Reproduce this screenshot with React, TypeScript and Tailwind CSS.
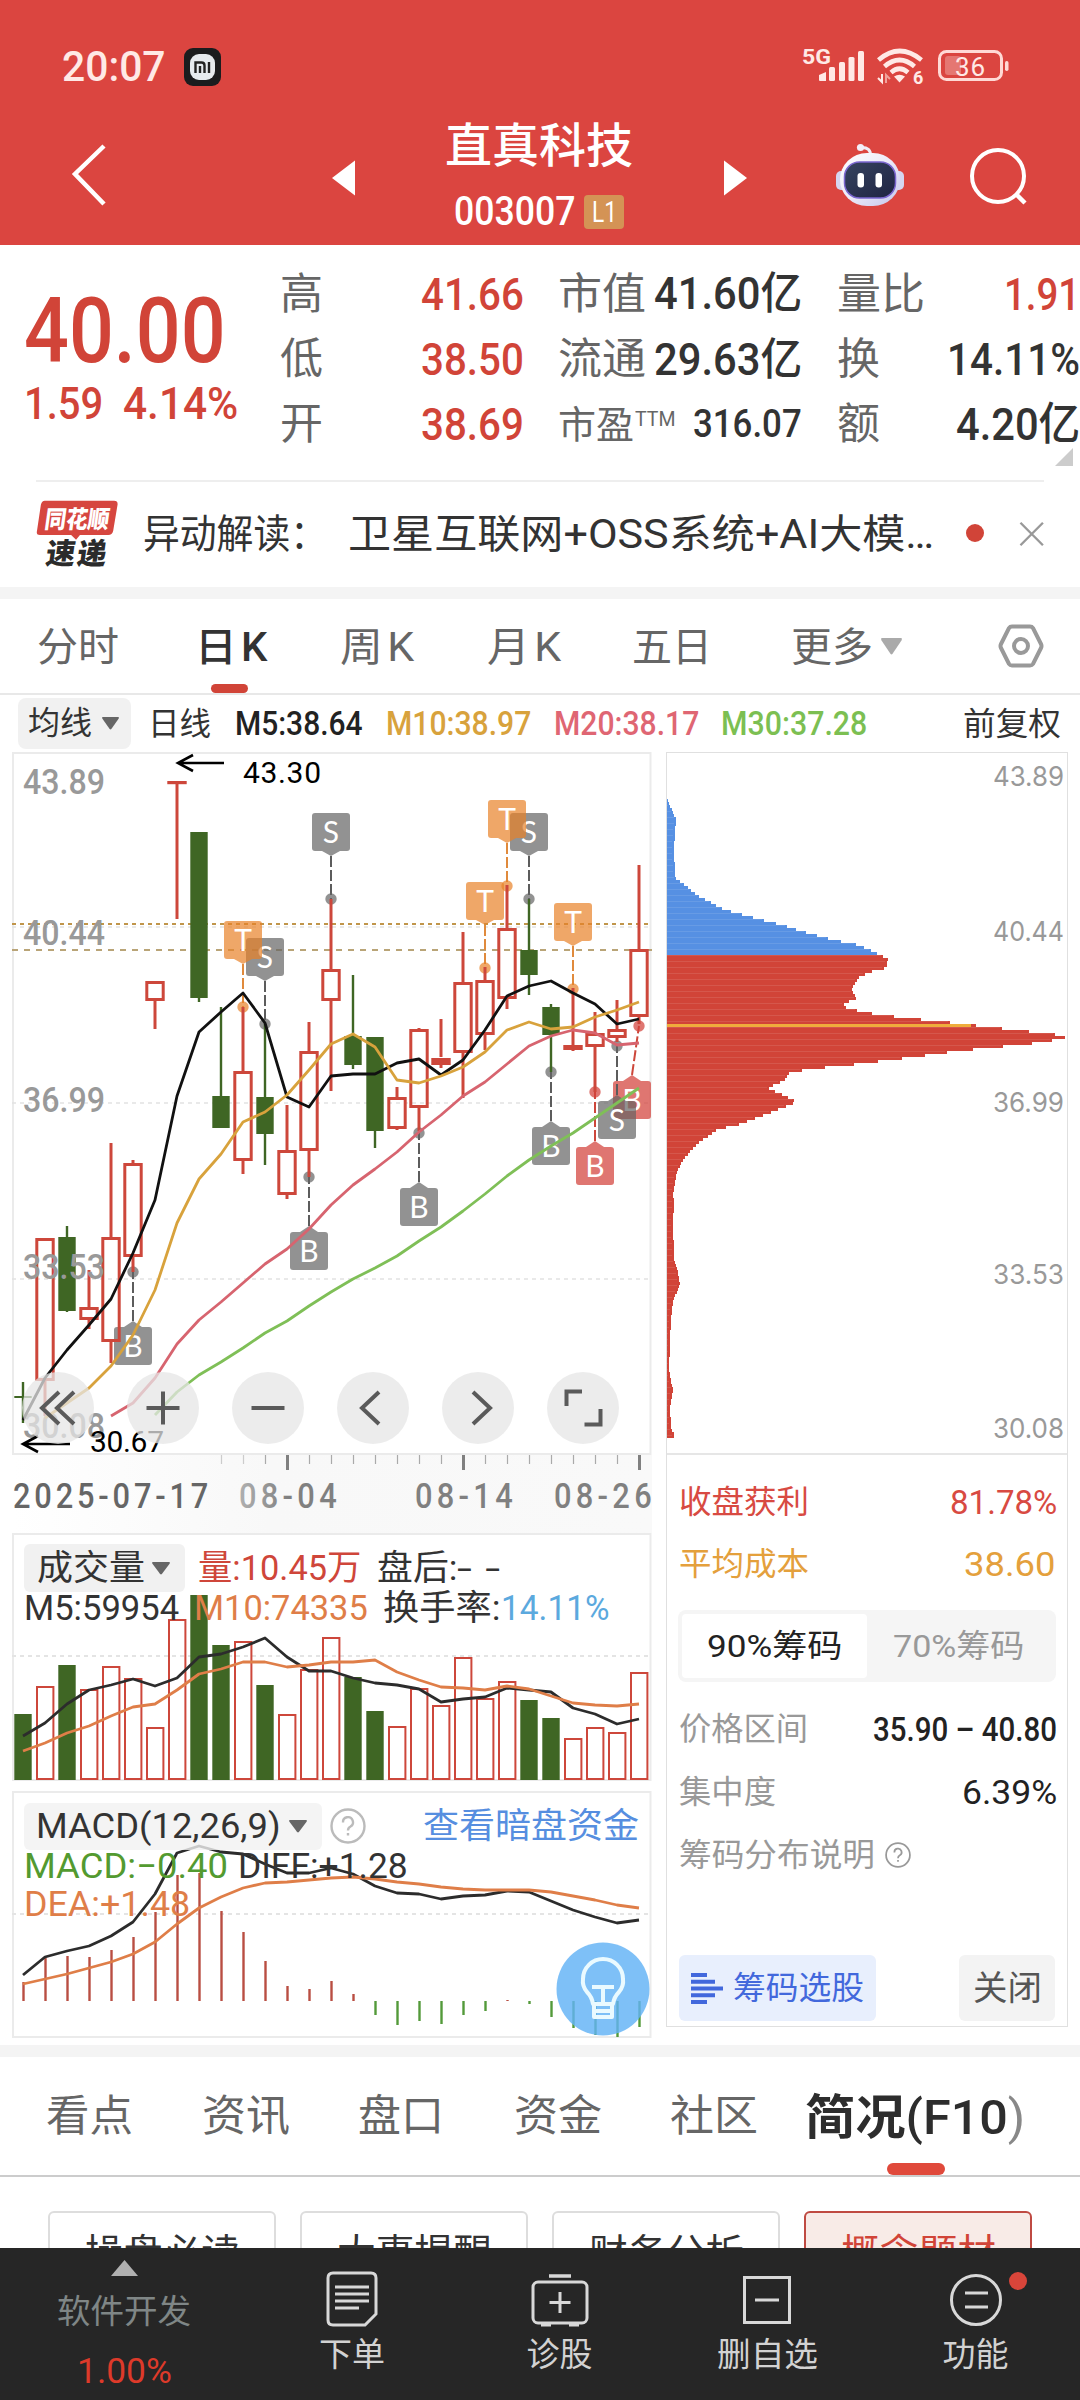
import React, { useLayoutEffect, useRef } from 'react';

interface FitProps {
  className?: string;
  children: React.ReactNode;
}

// Single line of text squeezed or stretched to the width of its box
const Fit: React.FC<FitProps> = ({ className = '', children }) => {
  const box = useRef<HTMLDivElement>(null);
  const text = useRef<HTMLSpanElement>(null);

  useLayoutEffect(() => {
    if (!box.current || !text.current) return;
    const ratio = box.current.clientWidth / text.current.offsetWidth;
    text.current.style.transform = `scaleX(${ratio})`;
  }, [children]);

  return (
    <div ref={box} className={`shrink-0 leading-none whitespace-nowrap ${className}`}>
      <span ref={text} className="inline-block origin-left">{children}</span>
    </div>
  );
};

const RED = '#cd473b';
const GREEN = '#3f6624';
const cx = (i: number) => 23 + 22 * i;

// [up, high, bodyTop, bodyBottom, low]
const candles: [boolean, number, number, number, number][] = [
  [false, 1382, 1396, 1398, 1423],
  [true, 1238, 1238, 1381, 1416],
  [false, 1226, 1237, 1311, 1312],
  [true, 1270, 1307, 1320, 1329],
  [true, 1143, 1237, 1342, 1363],
  [true, 1160, 1163, 1257, 1272],
  [true, 981, 981, 1001, 1029],
  [true, 783, 782, 784, 919],
  [false, 832, 832, 998, 1002],
  [false, 1007, 1096, 1128, 1128],
  [true, 1007, 1071, 1161, 1174],
  [false, 1024, 1097, 1134, 1165],
  [true, 1105, 1150, 1195, 1199],
  [true, 1022, 1051, 1151, 1177],
  [true, 899, 969, 1001, 1091],
  [false, 975, 1036, 1065, 1069],
  [false, 1037, 1037, 1131, 1148],
  [true, 1087, 1097, 1129, 1130],
  [true, 1028, 1029, 1108, 1131],
  [true, 1019, 1057, 1063, 1068],
  [true, 932, 982, 1053, 1098],
  [true, 967, 980, 1035, 1050],
  [true, 885, 928, 999, 1009],
  [false, 899, 950, 975, 995],
  [false, 1004, 1007, 1035, 1072],
  [true, 988, 1045, 1049, 1051],
  [true, 1012, 1033, 1047, 1092],
  [true, 1000, 1029, 1038, 1042],
  [true, 865, 949, 1017, 1024],
];

const ma5 = [1420, 1378, 1350, 1325, 1299, 1253, 1200, 1096, 1032, 1012, 993, 1023, 1097, 1107, 1076, 1074, 1074, 1063, 1059, 1075, 1060, 1030, 996, 986, 981, 993, 1004, 1024, 1019];
const ma10 = [1418, 1403, 1388, 1366, 1335, 1290, 1223, 1179, 1154, 1122, 1112, 1095, 1070, 1044, 1034, 1047, 1080, 1083, 1076, 1067, 1052, 1030, 1022, 1029, 1027, 1017, 1010, 1002];
const ma20 = [1416, 1403, 1378, 1344, 1320, 1302, 1283, 1264, 1249, 1229, 1205, 1185, 1169, 1152, 1132, 1115, 1096, 1082, 1064, 1046, 1036, 1030, 1033, 1045, 1043];
const ma30 = [1415, 1392, 1375, 1362, 1348, 1333, 1321, 1306, 1292, 1279, 1268, 1256, 1241, 1227, 1211, 1194, 1176, 1160, 1146, 1133, 1118, 1103, 1088];

const volumeTop = [1714, 1688, 1665, 1691, 1668, 1680, 1729, 1621, 1595, 1645, 1643, 1685, 1716, 1671, 1639, 1677, 1711, 1728, 1690, 1707, 1659, 1700, 1683, 1700, 1718, 1740, 1729, 1734, 1674];
const vol5 = [1736, 1723, 1704, 1690, 1685, 1679, 1686, 1678, 1657, 1654, 1647, 1638, 1657, 1671, 1671, 1678, 1683, 1685, 1689, 1702, 1699, 1697, 1688, 1690, 1692, 1708, 1714, 1724, 1719];
const vol10 = [1751, 1743, 1733, 1726, 1716, 1707, 1704, 1690, 1674, 1669, 1662, 1662, 1667, 1665, 1662, 1662, 1660, 1672, 1680, 1687, 1688, 1690, 1686, 1689, 1696, 1703, 1705, 1706, 1704];

const macdEnd = [1982, 1958, 1956, 1957, 1950, 1937, 1912, 1875, 1873, 1911, 1932, 1961, 1986, 1989, 1981, 1994, 2015, 2025, 2021, 2024, 2015, 2011, 2000, 2004, 2017, 2028, 2035, 2037, 2027];
const diff = [1975, 1957, 1951, 1946, 1936, 1922, 1894, 1853, 1846, 1852, 1854, 1864, 1873, 1873, 1868, 1874, 1886, 1893, 1894, 1899, 1896, 1895, 1891, 1892, 1901, 1910, 1917, 1923, 1920];
const dea = [1984, 1979, 1974, 1968, 1962, 1954, 1942, 1924, 1908, 1897, 1888, 1883, 1882, 1880, 1878, 1877, 1879, 1882, 1884, 1887, 1889, 1890, 1890, 1890, 1892, 1896, 1900, 1905, 1908];

// [y, x] outline of the chip distribution
const chips: [number, number][] = [
  [799, 667], [819, 676], [848, 674], [878, 675], [897, 700], [910, 725], [917, 751], [926, 785], [934, 811],
  [941, 838], [945, 858], [949, 868], [956, 882], [959, 888], [968, 886], [972, 870], [978, 858], [989, 852],
  [999, 856], [1002, 848], [1006, 842], [1009, 850], [1014, 874], [1018, 906], [1022, 946], [1025, 971],
  [1028, 998], [1031, 1024], [1034, 1053], [1037, 1067], [1042, 1045], [1045, 1018], [1048, 988], [1051, 957],
  [1055, 929], [1060, 890], [1065, 850], [1069, 810], [1073, 789], [1080, 785], [1088, 768], [1096, 785],
  [1102, 797], [1114, 767], [1125, 738], [1129, 718], [1144, 697], [1160, 683], [1172, 677], [1194, 673],
  [1204, 674], [1222, 673], [1261, 674], [1273, 678], [1284, 680], [1301, 673], [1318, 671], [1369, 669],
  [1391, 673], [1408, 670], [1429, 671], [1434, 674], [1437, 674],
];

const chipX = (y: number) => {
  for (let i = 1; i < chips.length; i++) {
    const [y0, x0] = chips[i - 1];
    const [y1, x1] = chips[i];
    if (y <= y1) return x0 + ((x1 - x0) * (y - y0)) / (y1 - y0);
  }
  return 674;
};

const Line: React.FC<{ data: number[]; color: string }> = ({ data, color }) => (
  <polyline
    points={data.map((y, i) => `${cx(i + 29 - data.length)},${y}`).join(' ')}
    fill="none"
    stroke={color}
    strokeWidth={2.8}
    strokeLinejoin="round"
  />
);

interface MarkProps {
  x: number;
  top: number;
  dot: number;
  letter: string;
  tone: 'gray' | 'orange' | 'red';
  dotX?: number;
}

const tones = {
  gray: ['rgba(100,100,100,.7)', '#5c5c5c'],
  orange: ['rgba(232,130,40,.7)', '#e08a3c'],
  red: ['rgba(210,65,58,.72)', '#cd473b'],
};

const Mark: React.FC<MarkProps> = ({ x, top, dot, letter, tone, dotX = x }) => {
  const [fill, line] = tones[tone];
  const above = dot > top;
  const tip = above ? top + 43 : top - 6;
  const base = above ? top + 38 : top;
  return (
    <g>
      <line x1={x} y1={tip} x2={dotX} y2={dot} stroke={line} strokeWidth={2} strokeDasharray="11 3" />
      <circle cx={dotX} cy={dot} r={5.7} fill={fill} />
      <rect x={x - 19} y={top} width={38} height={38} rx={3} fill={fill} />
      <path d={`M${x - 9} ${base}L${x} ${tip}L${x + 9} ${base}Z`} fill={fill} />
      <text x={x} y={top + 30} fill="#fff" fontSize={30} textAnchor="middle" fontFamily="Lato">{letter}</text>
    </g>
  );
};

const axis: [string, number][] = [['43.89', 794], ['40.44', 945], ['36.99', 1112], ['33.53', 1279], ['30.08', 1438]];
const chipAxis: [string, number][] = [['43.89', 786], ['40.44', 941], ['36.99', 1112], ['33.53', 1284], ['30.08', 1438]];

const CandleChart = () => (
  <svg className="block h-[703px] w-[640px]" viewBox="12 752 640 703" fontFamily="Roboto">
    <rect x="13" y="753" width="637.5" height="701" fill="#fff" stroke="#ebebeb" strokeWidth="2" />
    {[927, 1103, 1279].map(y => (
      <line key={y} x1="12" x2="650" y1={y} y2={y} stroke="#e2e2e2" strokeWidth="1.4" strokeDasharray="4 4" />
    ))}
    <line x1="12" x2="650" y1="924" y2="924" stroke="#c0954a" strokeWidth="2" strokeDasharray="4 4" />
    <line x1="12" x2="652" y1="950" y2="950" stroke="#b9a477" strokeWidth="2" strokeDasharray="6 6" />

    <Mark x={331} top={813} dot={899} letter="S" tone="gray" />
    <Mark x={265} top={938} dot={1024} letter="S" tone="gray" />
    <Mark x={243} top={921} dot={1007} letter="T" tone="orange" />
    <Mark x={529} top={813} dot={899} letter="S" tone="gray" />
    <Mark x={507} top={800} dot={886} letter="T" tone="orange" />
    <Mark x={485} top={882} dot={968} letter="T" tone="orange" />
    <Mark x={573} top={903} dot={989} letter="T" tone="orange" />
    <Mark x={133} top={1327} dot={1272} letter="B" tone="gray" />
    <Mark x={309} top={1232} dot={1177} letter="B" tone="gray" />
    <Mark x={419} top={1188} dot={1133} letter="B" tone="gray" />
    <Mark x={551} top={1127} dot={1072} letter="B" tone="gray" />
    <Mark x={595} top={1147} dot={1092} letter="B" tone="red" />
    <Mark x={632} dotX={639} top={1081} dot={1026} letter="B" tone="red" />
    <Mark x={617} top={1101} dot={1046} letter="S" tone="gray" />

    {candles.map(([up, high, top, bottom, low], i) => {
      const x = cx(i);
      if (!up) {
        return (
          <g key={i} fill={GREEN}>
            <rect x={x - 1.2} y={high} width={2.4} height={low - high} />
            <rect x={x - 8.7} y={top} width={17.4} height={bottom - top} />
          </g>
        );
      }
      return (
        <g key={i} stroke={RED} strokeWidth={3}>
          <line x1={x} x2={x} y1={high} y2={top} />
          <line x1={x} x2={x} y1={bottom} y2={low} />
          {bottom - top < 8 ? (
            <rect x={x - 8.2} y={(top + bottom) / 2 - 0.5} width={16.4} height={Math.max(bottom - top - 2, 0.2)} fill={RED} />
          ) : (
            <rect x={x - 8.2} y={top + 1.5} width={16.4} height={bottom - top - 3} fill="none" />
          )}
        </g>
      );
    })}
    {axis.map(([label, y]) => (
      <text key={label} x="23" y={y} fontSize="35" fontWeight="500" fill="#999" textLength="82" lengthAdjust="spacingAndGlyphs">{label}</text>
    ))}
    <g stroke="#000" strokeWidth="2.6" fill="none">
      <path d="M224 763H179M193 755L178 763L193 771" />
      <path d="M70 1444H24M38 1436L23 1444L38 1452" />
    </g>
    <text x="243" y="783" fontSize="30" textLength="78">43.30</text>
    <text x="90" y="1452" fontSize="30" textLength="74">30.67</text>
    <Line data={ma5} color="#111" />
    <Line data={ma10} color="#d8a23c" />
    <Line data={ma20} color="#d7646f" />
    <Line data={ma30} color="#7fbf57" />
  </svg>
);

const toolIcons = [
  'M37 20L20 36L37 52M52 20L35 36L52 52',
  'M19.500 36H52.500M36 19.500V52.500',
  'M19.500 36H52.500',
  'M42 20L25 36L42 52',
  'M31 20L48 36L31 52',
  'M19.500 34V19.500H35M53.500 37V52.500H37.500',
];

const DateAxis = () => (
  <svg className="block h-[78px] w-[640px]" viewBox="12 1455 640 78" fontFamily="Roboto">
    <defs>
      <linearGradient id="shade" x1="0" x2="1">
        <stop offset="0" stopColor="#fff" />
        <stop offset=".4" stopColor="#f8f8f8" />
        <stop offset="1" stopColor="#f9f9f9" />
      </linearGradient>
      <linearGradient id="fade" x1="0" x2="1">
        <stop offset="0" stopColor="#b0b0b0" />
        <stop offset=".5" stopColor="#808080" />
      </linearGradient>
    </defs>
    <rect x="12" y="1455" width="640" height="78" fill="url(#shade)" />
    {candles.map((_, i) => {
      if (i < 9) return null;
      const major = i === 12 || i === 20 || i === 28;
      return (
        <line
          key={i}
          x1={cx(i) + 0.5}
          x2={cx(i) + 0.5}
          y1="1455"
          y2={major ? 1470 : 1464}
          stroke={major ? '#808080' : i < 11 ? '#ccc' : '#aaa'}
          strokeWidth={major ? 3 : 1.2}
        />
      );
    })}
    <g fontSize="35" fontWeight="500">
      <g transform="translate(13 1508) scale(.88 1)">
        <text fill="#666" textLength="222">2025-07-17</text>
      </g>
      <g transform="translate(239 1508) scale(.88 1)">
        <text fill="url(#fade)" textLength="111">08-04</text>
      </g>
      <g transform="translate(415 1508) scale(.88 1)">
        <text fill="#808080" textLength="111">08-14</text>
      </g>
      <g transform="translate(554 1508) scale(.88 1)">
        <text fill="#808080" textLength="111">08-26</text>
      </g>
    </g>
  </svg>
);

const VolumeChart = () => (
  <svg className="block h-[248px] w-[640px]" viewBox="12 1533 640 248">
    <rect x="13" y="1534" width="637.5" height="246" fill="#fff" stroke="#ebebeb" strokeWidth="2" />
    <line x1="12" x2="650" y1="1656" y2="1656" stroke="#e4e4e4" strokeWidth="2" strokeDasharray="4 4" />
    {volumeTop.map((y, i) =>
      candles[i][0] ? (
        <rect key={i} x={cx(i) - 8} y={y - 1} width={16.4} height={1780 - y} fill="none" stroke={RED} strokeWidth={2} />
      ) : (
        <rect key={i} x={cx(i) - 8.7} y={y} width={17.4} height={1780 - y} fill={GREEN} />
      )
    )}
    <Line data={vol5} color="#2c2c2c" />
    <Line data={vol10} color="#df7e48" />
  </svg>
);

const MacdChart = () => (
  <svg className="block h-[247px] w-[640px]" viewBox="12 1791 640 247">
    <rect x="13" y="1792" width="637.500" height="245" fill="#fff" stroke="#ebebeb" strokeWidth="2" />
    <line x1="12" x2="650" y1="1914" y2="1914" stroke="#e4e4e4" strokeWidth="2" strokeDasharray="4 4" />
    {macdEnd.map((y, i) => (
      <line key={i} x1={cx(i) + 0.5} x2={cx(i) + 0.5} y1="2001" y2={y} stroke={y > 2001 ? '#539a3a' : '#b94e42'} strokeWidth={2.4} />
    ))}
    <Line data={diff} color="#2c2c2c" />
    <Line data={dea} color="#df7e48" />
  </svg>
);

const ChipChart = () => {
  const rows: number[] = [];
  for (let y = 799; y < 1437; y += 3) rows.push(y);
  return (
    <svg className="block h-[702px] w-[402px]" viewBox="666 752 402 702" fontFamily="Inter">
      <g shapeRendering="crispEdges">
        {rows.map(y => (
          <rect key={y} x="667" y={y} width={Math.max(chipX(y + 1.5) - 667, 1)} height="3" fill={y < 955 ? '#5690e3' : '#d14438'} />
        ))}
        {rows.filter((_, i) => i % 2 === 0).map(y => (
          <rect key={y} x="667" y={y} width={Math.max(chipX(y + 1.5) - 669, 1)} height="1" fill="#fff" opacity=".1" />
        ))}
        <rect x="667" y="1024" width="304" height="3" fill="#efad3c" />
      </g>
      {chipAxis.map(([label, y]) => (
        <text key={label} x="993" y={y} fontSize="27" fill="#999" textLength="71" lengthAdjust="spacingAndGlyphs">{label}</text>
      ))}
    </svg>
  );
};

const Caret: React.FC<{ className?: string }> = ({ className = '' }) => (
  <svg className={`shrink-0 ${className}`} viewBox="0 0 20 14" preserveAspectRatio="none" fill="currentColor">
    <path d="M1 0H19Q20.500 0 19.500 2L11 13Q10 14 9 13L.5 2Q-.5 0 1 0Z" />
  </svg>
);

const Help: React.FC<{ className?: string }> = ({ className = '' }) => (
  <svg className={`shrink-0 ${className}`} viewBox="0 0 36 36" fill="none" stroke="currentColor" strokeWidth="2.4">
    <circle cx="18" cy="18" r="16.500" />
    <path d="M13 14.500A5 5 0 1 1 20.500 18.500C18.500 19.600 18 20.500 18 22.500M18 25V27.500" />
  </svg>
);

const StatusBar = () => (
  <div className="flex h-[134px] items-center pl-[62px] text-[#ffe9e6]">
    <Fit className="w-[104px] text-[42px] font-medium">20:07</Fit>
    <svg className="-mt-px ml-[18px] h-[38px] w-[37px]" viewBox="0 0 37 38">
      <rect width="37" height="38" rx="9" fill="#1b1c1e" />
      <rect x="6" y="6" width="25" height="26" rx="9" fill="#e6eaee" />
      <path d="M11.500 25V14.500H17.500Q20.500 14.500 20.500 17.500V25M16 18V25M25 14V25" fill="none" stroke="#222" strokeWidth="2.4" />
    </svg>
    <svg className="ml-[579px] h-[44px] w-[212px]" viewBox="800 45 212 44">
      <text x="802" y="64" fontFamily="Roboto" fontWeight="700" fontSize="21" fill="#ffe9e6" textLength="29" lengthAdjust="spacingAndGlyphs">5G</text>
      <g fill="#ffe9e6">
        <path d="M819 75L826 72V81Q826 81 825 81H820Q819 81 819 80Z" />
        <rect x="829" y="67" width="6" height="14" rx="1.500" />
        <rect x="839" y="62" width="6" height="19" rx="1.500" />
        <rect x="848.500" y="57" width="6" height="24" rx="1.500" />
        <rect x="858" y="51" width="6" height="30" rx="1.500" />
        <path d="M894 76.500Q899.500 73 905 76.500L899.500 82.500Z" />
      </g>
      <g fill="none" stroke="#ffe9e6" strokeWidth="4.600">
        <path d="M878.500 60Q899.500 42 921.500 60" />
        <path d="M884.500 66.500Q899.500 53.500 914.500 66.500" />
        <path d="M891 72.500Q899.500 65 908 72.500" />
      </g>
      <path d="M878 78L882 82V74" fill="none" stroke="#ffe9e6" strokeWidth="2" />
      <path d="M886 83V75L890 79" fill="none" stroke="#f0a29c" strokeWidth="2" />
      <text x="913" y="84" fontFamily="Roboto" fontWeight="700" fontSize="18" fill="#ffe9e6">6</text>
      <rect x="939.500" y="51.500" width="62" height="28" rx="7" fill="none" stroke="#ffd9d5" strokeWidth="3" />
      <rect x="945" y="56" width="16" height="19" rx="3" fill="#e57772" />
      <rect x="1005" y="61" width="3.500" height="10" rx="1.700" fill="#ffd9d5" />
      <text x="955" y="75.500" fontFamily="Roboto" fontSize="26" fill="#ffe9e6" textLength="30">36</text>
    </svg>
  </div>
);

const TitleBar = () => (
  <div className="flex h-[111px] text-white">
    <svg className="mt-[9px] ml-[70px] h-[64px] w-[38px]" viewBox="0 0 38 64" fill="none" stroke="#fff" strokeWidth="4.500">
      <path d="M34 3L5 31L34 61" />
    </svg>
    <svg className="mt-[26px] ml-[223px] h-[36px] w-[25px]" viewBox="0 0 25 36"><path d="M1 18L24 0.500V35.500Z" fill="#fff" /></svg>
    <div className="ml-[89px] flex w-[188px] flex-col items-center">
      <Fit className="-mt-[12px] w-[188px] text-[47px] font-medium">直真科技</Fit>
      <div className="mt-[25px] flex h-[36px] items-center">
        <Fit className="w-[121px] text-[40px] font-medium">003007</Fit>
        <div className="ml-[9px] flex h-[34px] w-[40px] items-center justify-center rounded-[4px] bg-[#d49355]">
          <Fit className="w-[25px] text-[29px]">L1</Fit>
        </div>
      </div>
    </div>
    <svg className="mt-[26px] ml-[90px] h-[36px] w-[25px]" viewBox="0 0 25 36"><path d="M24 18L1 0.500V35.500Z" fill="#fff" /></svg>
    <svg className="mt-[8px] ml-[86px] h-[68px] w-[70px]" viewBox="834 142 70 68">
      <defs>
        <linearGradient id="shell" x1="0" y1="0" x2="1" y2="1">
          <stop offset="0" stopColor="#fff" />
          <stop offset=".5" stopColor="#eceaf8" />
          <stop offset="1" stopColor="#c3c6ec" />
        </linearGradient>
        <linearGradient id="visor" x1="0" y1="0" x2="1" y2="1">
          <stop offset="0" stopColor="#36435f" />
          <stop offset="1" stopColor="#1f2442" />
        </linearGradient>
      </defs>
      <path d="M861 147.500Q871 147 870.500 156" fill="none" stroke="#f0ecf6" strokeWidth="3" />
      <circle cx="860.500" cy="147.500" r="3.600" fill="#f3eef8" />
      <rect x="836" y="171" width="68" height="19" rx="5" fill="#d5d6f0" />
      <rect x="840" y="153" width="60" height="53" rx="27" fill="url(#shell)" />
      <rect x="844.500" y="162" width="51" height="36" rx="15" fill="url(#visor)" stroke="#7a66cf" strokeWidth="1.500" />
      <rect x="857.500" y="173" width="6.500" height="14.500" rx="3" fill="#fff" />
      <rect x="875.500" y="173" width="6.500" height="14.500" rx="3" fill="#fff" />
    </svg>
    <svg className="mt-[14px] ml-[64px] h-[60px] w-[60px]" viewBox="0 0 60 60" fill="none" stroke="#fff" strokeWidth="4">
      <circle cx="30" cy="28" r="26" />
      <path d="M48 46L57 55" strokeWidth="4.500" />
    </svg>
  </div>
);

const Quote = () => (
  <div className="flex h-[235px]">
    <div className="w-[256px] pt-[42px] pl-[24px] text-[#d14438]">
      <Fit className="w-[202px] text-[90px] font-medium">40.00</Fit>
      <div className="mt-[4px] flex gap-[20px]">
        <Fit className="w-[79px] text-[45px] font-medium">1.59</Fit>
        <Fit className="w-[115px] text-[45px] font-medium">4.14%</Fit>
      </div>
    </div>
    <div className="flex flex-col pt-[16px] text-[43px] text-[#666]">
      <div className="flex h-[66px] items-center">
        <Fit className="ml-[24px] w-[43px]">高</Fit>
        <Fit className="ml-[98px] w-[103px] text-[45px] font-medium text-[#d14438]">41.66</Fit>
        <Fit className="ml-[34px] w-[88px]">市值</Fit>
        <Fit className="ml-[8px] w-[148px] text-[44px] font-medium text-[#333]">41.60亿</Fit>
        <Fit className="ml-[35px] w-[88px]">量比</Fit>
        <Fit className="ml-[79px] w-[76px] text-[45px] font-medium text-[#d14438]">1.91</Fit>
      </div>
      <div className="flex h-[65px] items-center">
        <Fit className="ml-[24px] w-[43px]">低</Fit>
        <Fit className="ml-[98px] w-[103px] text-[45px] font-medium text-[#d14438]">38.50</Fit>
        <Fit className="ml-[34px] w-[88px]">流通</Fit>
        <Fit className="ml-[8px] w-[148px] text-[44px] font-medium text-[#333]">29.63亿</Fit>
        <Fit className="ml-[35px] w-[43px]">换</Fit>
        <Fit className="ml-[67px] w-[133px] text-[45px] font-medium text-[#333]">14.11%</Fit>
      </div>
      <div className="flex h-[65px] items-center">
        <Fit className="ml-[24px] w-[43px]">开</Fit>
        <Fit className="ml-[98px] w-[103px] text-[45px] font-medium text-[#d14438]">38.69</Fit>
        <Fit className="ml-[34px] w-[76px] text-[38px]">市盈</Fit>
        <Fit className="mb-[12px] ml-[1px] w-[40px] text-[20px]">TTM</Fit>
        <Fit className="ml-[18px] w-[109px] text-[39px] font-medium text-[#333]">316.07</Fit>
        <Fit className="ml-[35px] w-[43px]">额</Fit>
        <Fit className="ml-[76px] w-[124px] text-[45px] font-medium text-[#333]">4.20亿</Fit>
      </div>
      <svg className="mt-[-9px] ml-[799px] h-[18px] w-[18px]" viewBox="0 0 18 18"><path d="M18 0V18H0Z" fill="#ccc" /></svg>
    </div>
  </div>
);

const News = () => (
  <div className="mx-[36px] flex h-[107px] items-center border-t-2 border-[#eee]">
    <svg className="-mt-[2px] h-[70px] w-[84px]" viewBox="36 498 84 70" fontFamily="'Noto Sans CJK SC'" fontWeight="900">
      <path d="M45 499H116Q120 499 119.500 503L115 530Q114 534 110 534H81L77 539L72 534H40Q36 534 37 530L41 503Q42 499 45 499Z" fill="#d6463f" />
      <text transform="translate(44 527) skewX(-8)" fontSize="25" fill="#fff" textLength="66" lengthAdjust="spacingAndGlyphs">同花顺</text>
      <text transform="translate(45 564) skewX(-8)" fontSize="30" fill="#2b2b2b" textLength="62">速递</text>
    </svg>
    <Fit className="ml-[25px] w-[184px] text-[40px] text-[#333]">异动解读：</Fit>
    <Fit className="ml-[21px] w-[586px] text-[40px] text-[#333]">卫星互联网+OSS系统+AI大模…</Fit>
    <div className="-mt-[3px] ml-[32px] size-[18px] rounded-full bg-[#d14438]" />
    <svg className="-mt-[2px] ml-[35px] size-[26px]" viewBox="0 0 26 26" stroke="#999" strokeWidth="2.400"><path d="M1.500 1.500L24.500 24.500M24.500 1.500L1.500 24.500" /></svg>
  </div>
);

const PeriodTabs = () => (
  <div className="flex h-[96px] items-center border-b-2 border-[#e8e8e8] text-[40px] text-[#666]">
    <Fit className="mt-[3px] ml-[37px] w-[82px]">分时</Fit>
    <div className="relative ml-[76px] flex h-full items-center">
      <Fit className="mt-[3px] w-[72px] font-medium text-[#333]">日<span className="ml-1">K</span></Fit>
      <div className="absolute bottom-0 left-[16px] h-[9px] w-[37px] rounded-[5px] bg-[#d14438]" />
    </div>
    <Fit className="mt-[3px] ml-[73px] w-[74px]">周<span className="ml-1">K</span></Fit>
    <Fit className="mt-[3px] ml-[73px] w-[74px]">月<span className="ml-1">K</span></Fit>
    <Fit className="mt-[3px] ml-[71px] w-[80px]">五日</Fit>
    <Fit className="mt-[3px] ml-[79px] w-[82px]">更多</Fit>
    <Caret className="ml-[8px] h-[17px] w-[21px] text-[#aaa]" />
    <svg className="ml-[96px] h-[44px] w-[46px]" viewBox="0 0 46 44" fill="none" stroke="#999" strokeWidth="4">
      <path d="M14 2.500H32Q34 2.500 35 4L43 20Q44 22 43 24L35 40Q34 41.500 32 41.500H14Q12 41.500 11 40L3 24Q2 22 3 20L11 4Q12 2.500 14 2.500Z" />
      <circle cx="23" cy="22" r="7" />
    </svg>
  </div>
);

const AverageRow = () => (
  <div className="flex h-[57px] items-center text-[33px] text-[#333]">
    <div className="-mt-[1px] ml-[18px] flex h-[51px] w-[113px] items-center rounded-[8px] bg-[#f1f1f1] pl-[10px]">
      <Fit className="w-[64px] text-[32px]">均线</Fit>
      <Caret className="ml-[10px] h-[13px] w-[17px] text-[#666]" />
    </div>
    <Fit className="ml-[17px] w-[63px] text-[32px]">日线</Fit>
    <Fit className="ml-[24px] w-[128px] font-medium text-[#222]">M5:38.64</Fit>
    <Fit className="ml-[23px] w-[145px] font-medium text-[#d8a23c]">M10:38.97</Fit>
    <Fit className="ml-[23px] w-[145px] font-medium text-[#df6673]">M20:38.17</Fit>
    <Fit className="ml-[22px] w-[146px] font-medium text-[#7cbf52]">M30:37.28</Fit>
    <Fit className="ml-[96px] w-[98px] text-[32px]">前复权</Fit>
  </div>
);

const ChipPanel = () => (
  <div className="ml-[14px] h-[1275px] w-[402px] border border-[#e0e0e0]">
    <div className="-m-px"><ChipChart /></div>
    <div className="flex h-[571px] flex-col border-t-2 border-[#e6e6e6] pl-[12px]">
      <div className="mt-[15px] flex h-[63px] items-center text-[#d84a42]">
        <Fit className="w-[130px] text-[32px]">收盘获利</Fit>
        <Fit className="ml-[141px] w-[107px] text-[34px]">81.78%</Fit>
      </div>
      <div className="flex h-[62px] items-center text-[#e4a03c]">
        <Fit className="w-[130px] text-[32px]">平均成本</Fit>
        <Fit className="ml-[155px] w-[91px] text-[34px]">38.60</Fit>
      </div>
      <div className="-ml-[1px] mt-[15px] flex h-[72px] w-[378px] rounded-[8px] bg-[#f5f5f5] p-[4px]">
        <div className="flex w-[185px] items-center justify-center rounded-[4px] bg-white">
          <Fit className="w-[135px] text-[32px] text-[#222]">90%筹码</Fit>
        </div>
        <div className="flex w-[182px] items-center justify-center">
          <Fit className="w-[131px] text-[32px] text-[#999]">70%筹码</Fit>
        </div>
      </div>
      <div className="mt-[16px] flex h-[62px] items-center text-[#999]">
        <Fit className="w-[129px] text-[32px]">价格区间</Fit>
        <Fit className="ml-[65px] w-[184px] text-[33px] font-medium text-[#222]">35.90 – 40.80</Fit>
      </div>
      <div className="flex h-[63px] items-center text-[#999]">
        <Fit className="w-[97px] text-[32px]">集中度</Fit>
        <Fit className="ml-[186px] w-[95px] text-[34px] text-[#222]">6.39%</Fit>
      </div>
      <div className="flex h-[63px] items-center text-[#999]">
        <Fit className="w-[196px] text-[32px]">筹码分布说明</Fit>
        <Help className="ml-[10px] size-[26px]" />
      </div>
      <div className="mt-[69px] flex text-[32px]">
        <div className="flex h-[66px] w-[197px] items-center rounded-[6px] bg-[#e8effd] pl-[12px] text-[#4268dc]">
          <svg className="h-[31px] w-[32px]" viewBox="0 0 32 31" fill="currentColor">
            <path d="M0 0H16V4H0ZM0 6.700H24V10.700H0ZM0 13.500H32V17.500H0ZM0 20.200H24V24.200H0ZM0 27H16V31H0Z" />
          </svg>
          <Fit className="ml-[10px] w-[131px]">筹码选股</Fit>
        </div>
        <div className="ml-[83px] flex h-[66px] w-[96px] items-center justify-center rounded-[6px] bg-[#f3f3f3] text-[#555]">
          <Fit className="w-[69px] text-[34px]">关闭</Fit>
        </div>
      </div>
    </div>
  </div>
);

const Charts = () => (
  <div className="flex h-[1293px] pl-[12px]">
    <div className="w-[640px]">
      <div className="relative">
        <CandleChart />
        <div className="absolute bottom-[11px] left-[10px] flex gap-[33px]">
          {toolIcons.map(d => (
            <div key={d} className="size-[72px] rounded-full bg-[#e6e6e6]/75">
              <svg viewBox="0 0 72 72" fill="none" stroke="#5a5a5a" strokeWidth="4"><path d={d} /></svg>
            </div>
          ))}
        </div>
      </div>
      <DateAxis />
      <div className="relative">
        <VolumeChart />
        <div className="absolute top-[11px] left-[12px] text-[35px] text-[#333]">
          <div className="flex h-[48px] items-center">
            <div className="flex h-[48px] w-[161px] items-center rounded-[6px] bg-[#f1f1f1] pl-[13px]">
              <Fit className="w-[108px]">成交量</Fit>
              <Caret className="ml-[7px] h-[13px] w-[18px] text-[#666]" />
            </div>
            <Fit className="ml-[13px] w-[163px] text-[#cf463a]">量:10.45万</Fit>
            <Fit className="ml-[16px] w-[80px]">盘后:</Fit>
            <Fit className="w-[43px]">- -</Fit>
          </div>
          <div className="flex h-[32px] items-center">
            <Fit className="w-[155px]">M5:59954</Fit>
            <Fit className="ml-[15px] w-[174px] text-[#df7e48]">M10:74335</Fit>
            <Fit className="ml-[15px] w-[117px]">换手率:</Fit>
            <Fit className="ml-px w-[109px] text-[#5ba9de]">14.11%</Fit>
          </div>
        </div>
      </div>
      <div className="relative mt-[10px]">
        <MacdChart />
        <div className="absolute top-[11px] left-[12px] w-[616px] text-[35px] text-[#333]">
          <div className="flex h-[48px] items-center">
            <div className="flex h-[47px] w-[298px] items-center rounded-[6px] bg-[#f1f1f1]/80 pl-[12px]">
              <Fit className="w-[245px]">MACD(12,26,9)</Fit>
              <Caret className="ml-[8px] h-[13px] w-[18px] text-[#666]" />
            </div>
            <Help className="ml-[8px] size-[36px] text-[#bbb]" />
            <Fit className="ml-[57px] w-[216px] text-[#568ee0]">查看暗盘资金</Fit>
          </div>
          <div className="flex h-[32px] items-center">
            <Fit className="w-[204px] text-[#539a30]">MACD:−0.40</Fit>
            <Fit className="ml-[10px] w-[170px]">DIFF:+1.28</Fit>
          </div>
          <Fit className="mt-[5px] w-[166px] text-[#df7e48]">DEA:+1.48</Fit>
        </div>
        <svg className="absolute right-[2px] bottom-[2px] size-[94px]" viewBox="0 0 94 94">
          <circle cx="47" cy="47" r="46.500" fill="#62b2f5" opacity=".82" />
          <g fill="none" stroke="#eafaff" strokeWidth="4" strokeLinejoin="round">
            <path d="M37 62Q36 55 31 50Q26 44 27 37A20 20 0 0 1 67 37Q68 44 63 50Q58 55 57 62Z" />
            <path d="M38 62V75H56V62M37 69H57M36 45H58M47 45V62" />
          </g>
        </svg>
      </div>
    </div>
    <ChipPanel />
  </div>
);

const InfoTabs = () => (
  <div className="flex h-[120px] items-center border-b-2 border-[#ccc] text-[43px] text-[#666]">
    <Fit className="ml-[46px] w-[87px]">看点</Fit>
    <Fit className="ml-[69px] w-[88px]">资讯</Fit>
    <Fit className="ml-[68px] w-[86px]">盘口</Fit>
    <Fit className="ml-[70px] w-[88px]">资金</Fit>
    <Fit className="ml-[68px] w-[88px]">社区</Fit>
    <div className="relative ml-[47px] flex h-full items-center">
      <Fit className="mt-[3px] w-[220px] text-[48px] font-bold text-[#2d2d2d]">简况<span className="font-medium">(F10</span><span className="font-normal text-[#888]">)</span></Fit>
      <div className="absolute bottom-0 left-[82px] h-[12px] w-[58px] rounded-[6px] bg-[#e0493b]" />
    </div>
  </div>
);

const topics = ['操盘必读', '大事提醒', '财务分析', '概念题材'];

const Topics = () => (
  <div className="flex h-[71px] gap-[24px] overflow-hidden pt-[34px] pl-[48px]">
    {topics.map((t, i) => (
      <div
        key={t}
        className={`flex h-[84px] w-[228px] justify-center rounded-[6px] border-2 pt-[21px] text-[38px] ${
          i === 3 ? 'border-[#bf4a42] bg-[#f8ebe7] text-[#d14438]' : 'border-[#ddd] text-[#333]'
        }`}
      >
        <Fit className="w-[155px]">{t}</Fit>
      </div>
    ))}
  </div>
);

const BottomBar = () => (
  <div className="flex h-[152px] bg-[#262626] text-[33px] text-[#d2d2d2]">
    <div className="flex w-[248px] flex-col items-center">
      <svg className="mt-[12px] h-[16px] w-[27px]" viewBox="0 0 27 16"><path d="M13.500 0L27 16H0Z" fill="#b0b0b0" /></svg>
      <Fit className="mt-[19px] w-[134px] text-[#7f8686]">软件开发</Fit>
      <Fit className="mt-[26px] w-[95px] text-[35px] text-[#dd3a2a]">1.00%</Fit>
    </div>
    <div className="flex w-[208px] flex-col items-center">
      <svg className="mt-[23px] h-[56px] w-[52px]" viewBox="0 0 52 56" fill="none" stroke="#d8d8d8" strokeWidth="3">
        <path d="M7 2H45Q50 2 50 7V43L39 54H7Q2 54 2 49V7Q2 2 7 2Z" />
        <path d="M9 16H43M9 23H43M9 30H43M9 37H33" />
      </svg>
      <Fit className="mt-[11px] w-[66px]">下单</Fit>
    </div>
    <div className="flex w-[207px] flex-col items-center">
      <svg className="mt-[26px] h-[53px] w-[58px]" viewBox="0 0 58 53" fill="none" stroke="#d8d8d8" strokeWidth="3">
        <path d="M18 2H40" strokeWidth="3.500" />
        <rect x="2" y="8" width="54" height="41" rx="5" />
        <path d="M10 51H20M38 51H48M29 18V39M18.500 28.500H39.500" />
      </svg>
      <Fit className="mt-[11px] w-[66px]">诊股</Fit>
    </div>
    <div className="flex w-[208px] flex-col items-center">
      <svg className="mt-[28px] h-[48px] w-[48px]" viewBox="0 0 48 48" fill="none" stroke="#d8d8d8" strokeWidth="3">
        <rect x="1.500" y="1.500" width="45" height="45" />
        <path d="M12 24H36" />
      </svg>
      <Fit className="mt-[14px] w-[101px]">删自选</Fit>
    </div>
    <div className="relative flex w-[209px] flex-col items-center">
      <svg className="mt-[26px] h-[52px] w-[52px]" viewBox="0 0 52 52" fill="none" stroke="#d8d8d8" strokeWidth="3">
        <circle cx="26" cy="26" r="24.500" />
        <path d="M15 19H38M15 33H38" />
      </svg>
      <Fit className="mt-[12px] w-[66px]">功能</Fit>
      <div className="absolute top-[24px] left-[138px] size-[18px] rounded-full bg-[#d9453a]" />
    </div>
  </div>
);

const App: React.FC = () => {
  return (
    <div className="h-[2400px] w-[1080px] overflow-hidden bg-white font-[Roboto,'Noto_Sans_CJK_SC',sans-serif]">
      <header className="bg-[#db4540]">
        <StatusBar />
        <TitleBar />
      </header>
      <Quote />
      <News />
      <div className="h-[12px] bg-[#f4f4f4]" />
      <PeriodTabs />
      <AverageRow />
      <Charts />
      <div className="h-[12px] bg-[#f4f4f4]" />
      <InfoTabs />
      <Topics />
      <BottomBar />
    </div>
  );
};

export default App;
